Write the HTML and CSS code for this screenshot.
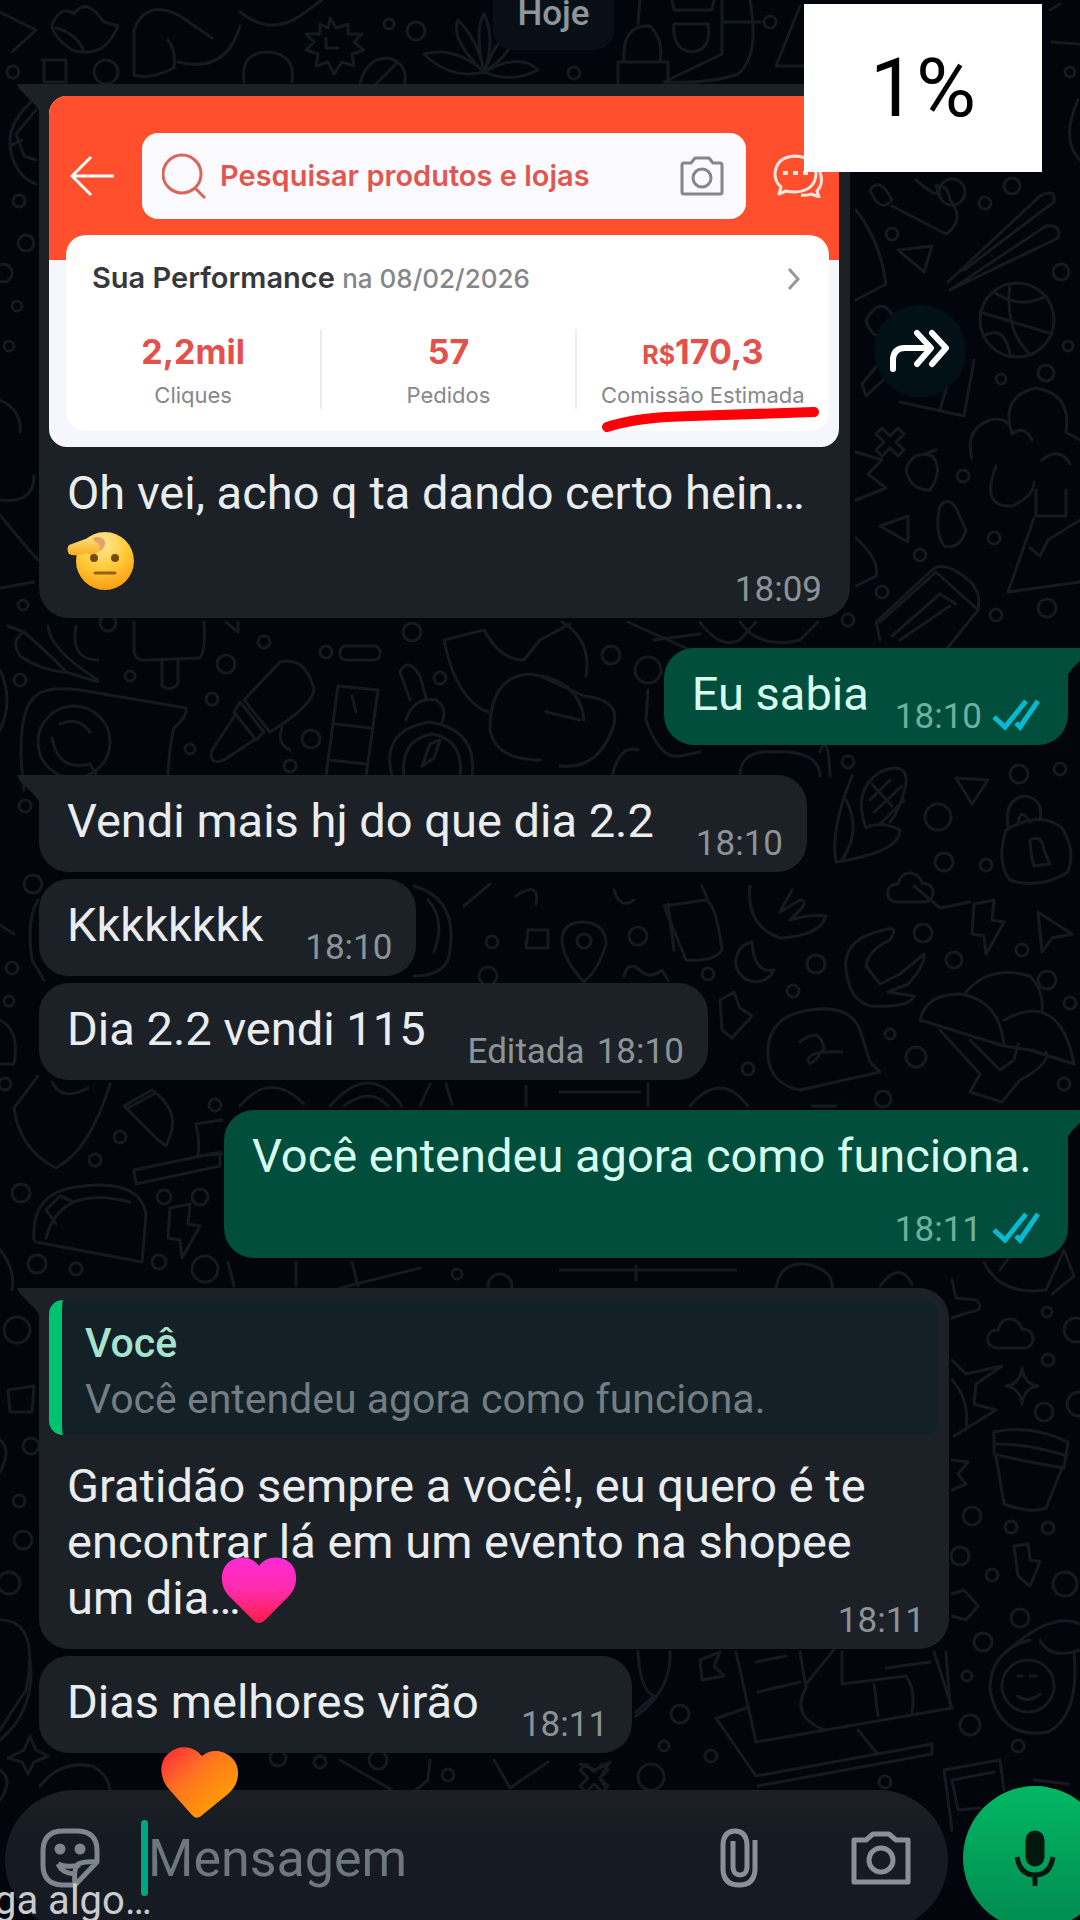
FILE: index.html
```html
<!DOCTYPE html>
<html lang="pt-BR">
<head>
    <meta charset="UTF-8">
    <meta name="viewport" content="width=device-width, initial-scale=1.0">
    <title>Conversa</title>
    <link rel="stylesheet" href="styles.css">
</head>
<body>
    <div class="screen">
        <!-- Wallpaper doodles -->
        <svg class="wallpaper" viewBox="0 0 1080 1920" preserveAspectRatio="xMidYMin slice" aria-hidden="true">
            <defs>
                <path id="bolt" d="M-14-24L6-28L4-8L16-6L-2 26L-4 8L-16 6Z"/>
                <path id="cross" d="M-14-8L-8-14L0-6L8-14L14-8L6 0L14 8L8 14L0 6L-8 14L-14 8L-6 0Z"/>
                <path id="tri" d="M-16-10L16-8L0 16Z"/>
                <path id="spark" d="M0-18Q2-2 16 0Q2 2 0 18Q-2 2-16 0Q-2-2 0-18Z"/>
                <path id="cloud" d="M-14 14Q-24 12-22 2Q-20-4-12-4Q-8-18 4-14Q10-12 12-5Q24-4 23 6Q21 14 14 14Z"/>
                <path id="moon" d="M-2-20A20 20 0 1 0 20 8Q0 12-2-20Z"/>
                <path id="cup" d="M-36-36Q0-44 38-26L34 0Q-4-6-36-14ZM-34-12L-26 36Q0 46 16 40L32 0M-34-24Q0-24 37-12"/>
            </defs>
            <!-- top -->
            <path d="M0 12L36 30L12 52M52 24Q62 4 74 14Q86-4 104 22L118 26Q104 60 72 50Q52 36 52 24ZM56 28Q78 34 84 52M134 30Q146-2 180 16L212 38M134 30L134 75Q150 80 174 68Q176 50 168 40M178 62Q226 74 240 26M240 12Q270 36 300 16L322 0M244 82Q240 52 268 52Q296 54 292 82M42 60H66V82H44V60"/>
            <path d="M330 18L336 28L348 24L348 34L362 34L354 42L364 50L352 54L354 66L342 62L334 74L328 62L316 66L318 54L306 50L314 42L306 34L320 34L320 24L328 28ZM326 38V48H338"/>
            <path d="M484 72Q450 40 458 20Q478 40 484 72Q474 30 484 14Q496 40 484 72Q500 30 514 36Q510 56 484 72Q520 52 538 70Q510 84 484 72Q450 80 424 54Q456 46 484 72"/>
            <path d="M360 84Q366 58 388 58Q410 64 404 86M376 84L398 62M618 84V62H668V82M624 60Q622 24 650 26Q664 40 660 60M640 0L638 24M672 0L674 10H712L714 0M674 24H708Q712 50 692 52Q672 50 674 24ZM722 0V54L664 82M750 0Q760 56 738 74Q710 84 664 82M722 22H760M800 6L776 66H804M1050 10L1060 4M1052 42L1080 44M1078 100Q1060 140 1080 160"/>
            <path d="M36 98Q8 120 10 146Q14 176 36 184M36 110L16 134L24 156L36 160M10 146L22 140"/>
            <!-- right of the first bubble -->
            <path d="M870 190Q880 176 892 200Q880 214 870 190M892 206L946 234Q966 220 950 200Q948 184 936 186Q944 204 916 180M856 210Q880 240 886 284L856 300M898 250L932 246L924 272Z"/>
            <path d="M948 282L1040 196Q1056 188 1054 202L964 270M950 290L1046 226Q1062 224 1058 238Z"/>
            <circle cx="1017" cy="320" r="37"/>
            <path d="M980 312L1052 334M994 292Q1020 310 1046 296M1010 284Q1004 330 1030 354M984 336Q1004 324 1010 354M866 320Q880 296 892 314L888 334Q872 342 866 320M862 384L880 362L892 372L866 396ZM900 402L964 416L974 360M940 410L950 376"/>
            <use href="#cross" x="890" y="442"/>
            <path d="M972 458Q964 430 990 420Q1010 416 1012 434Q1000 396 1036 388Q1072 394 1066 432Q1080 440 1080 440M1012 434Q1024 424 1032 440M996 466Q980 508 1012 506Q1034 496 1034 482M1036 490V516H1066L1066 490M1034 518L1008 592L1080 582M1080 520L1048 540L1040 556L1030 548M1042 460Q1060 446 1070 464"/>
            <path d="M856 452L882 460L868 474L886 488L856 500M906 470Q912 450 932 456Q944 470 930 490Q910 490 906 470ZM924 454L936 450M880 526L908 516V542ZM940 506Q948 496 956 508L966 530Q960 550 944 546Q934 530 940 506M856 538Q880 560 876 576L856 586"/>
            <path d="M880 640L876 622L932 570Q944 560 966 578Q982 590 978 610L946 650M880 622L936 572L976 608M892 636L940 594L956 604M900 640L950 606"/>
            <!-- left edge and strip under the first bubble -->
            <path d="M0 400Q22 410 20 432M0 500Q34 504 34 476M0 515Q20 540 38 560M0 588L34 582M0 670Q14 700 0 730M8 626L24 632Q56 660 66 672L98 682M24 632Q10 640 20 656Q40 670 64 672M48 626Q50 650 98 680M76 626Q70 660 98 660M134 622V652Q136 662 148 660L200 658Q206 650 204 622M162 662V686Q170 692 178 684V660M226 622L238 632L238 622"/>
            <rect x="340" y="646" width="40" height="14" rx="6"/>
            <path d="M24 790Q14 710 38 694Q50 686 80 690L186 708Q188 716 174 728Q170 740 168 776"/>
            <circle cx="74" cy="742" r="36"/>
            <path d="M52 738Q58 772 90 764L96 774M60 724Q78 716 90 732M244 700L280 662Q306 656 314 690Q312 706 270 732ZM240 702L264 732L256 740L234 712ZM236 714L212 750Q208 766 224 760L254 740M282 728Q276 744 290 750M338 686L378 690L366 776M338 686L326 776M336 724L370 728M330 760L366 764M352 696L356 712M400 672Q408 656 420 676L426 698M400 672L410 700M406 720Q414 696 436 700Q448 708 442 722M392 776Q380 730 430 722Q478 730 472 776M404 776Q400 740 432 734Q464 740 460 776M422 766L430 744L440 740L434 758Z"/>
            <path d="M444 640L484 630Q500 660 524 660L540 640M444 640Q456 700 488 712M490 730Q490 676 530 674Q580 680 584 720M490 730Q496 760 540 760M540 676L584 696Q620 700 614 724Q600 770 560 766M546 712L580 720M562 622Q592 640 586 676M540 640L570 624M628 622L690 650M654 640L700 634M700 622Q720 650 740 640L756 622M740 622Q760 650 800 640L818 622M648 690L646 720Q660 760 680 756L700 752M612 776Q620 744 638 750M740 776Q740 750 772 752Q820 750 820 776M830 776Q828 730 820 752"/>
            <!-- around the short messages -->
            <path d="M852 776Q830 830 836 862L848 860Q900 850 900 830Q880 820 866 828M846 800Q862 830 842 860M866 828Q852 790 880 772Q908 760 906 784Q900 810 890 822M870 800L890 780M874 812L902 786M880 824L904 800M872 784L892 806"/>
            <use href="#tri" x="972" y="788"/>
            <path d="M1008 826Q1004 800 1024 796Q1044 798 1040 820M1018 824Q1020 806 1030 822M1006 830Q1040 810 1062 828Q1076 850 1068 872Q1040 890 1010 880Q996 862 1006 830ZM1030 840Q1042 834 1044 850L1050 864L1034 866Q1030 852 1030 840"/>
            <path d="M414 886Q462 900 448 960Q440 976 414 976M428 900Q446 920 434 952M464 906L490 884M516 896Q540 880 536 904M528 930L548 930V948H526ZM562 940Q562 922 584 922Q606 924 606 944Q600 968 584 982Q562 958 562 940Z"/>
            <circle cx="584" cy="941" r="7"/>
            <path d="M624 976Q628 960 640 970Q650 980 662 970L668 980M664 906L706 900Q716 904 722 950Q714 962 686 960ZM668 904L674 950M702 886L708 900M614 890Q620 910 634 900M750 886Q746 926 780 938Q820 936 826 916Q810 914 790 920Q812 900 800 900L780 912L792 890M914 886L940 908L970 902"/>
            <use href="#moon" x="754" y="962"/>
            <use href="#cloud" x="910" y="888"/>
            <use href="#bolt" x="988" y="928"/>
            <path d="M1038 912L1042 952L1052 938L1072 934ZM848 980Q836 940 884 930Q900 924 890 940Q868 950 866 966L880 984L900 974L924 954Q926 964 908 984L888 992L914 996Q910 1008 870 1006Q852 1000 848 980M720 1000L734 992L740 1008L752 1016L732 1038L722 1030ZM768 1056Q766 1016 810 1010Q850 1004 860 1030L870 1062L880 1072L800 1090Q770 1084 768 1056M800 1042Q820 1026 824 1048Q810 1070 808 1060Q810 1050 842 1052M920 1020Q926 994 960 994Q1000 1000 1004 1046ZM966 992Q990 964 1030 976Q1044 990 1042 1010M1004 1020Q1060 990 1074 1064L1030 1050L1004 1046M940 1030L980 1074L970 1092L1002 1102L1020 1080Q1050 1064 1046 1052M970 1040L1000 1070L1014 1060L1018 1044"/>
            <!-- left edge middle -->
            <path d="M38 900Q26 920 32 960L44 980M0 925L14 934M0 1020Q20 1030 14 1064L0 1064M38 1076L14 1108Q20 1150 56 1168Q90 1150 110 1084M52 1082Q62 1102 88 1088M124 1106L152 1090Q180 1110 170 1136L166 1146L156 1138ZM128 1108L154 1094M222 1120L196 1124Q200 1140 198 1156L222 1154M134 1170L220 1152V1166L136 1184ZM240 1106Q270 1070 304 1104M330 1106Q370 1060 402 1106M344 1106Q370 1086 388 1106M420 1106L430 1084M446 1084L452 1104M526 1086V1106M560 1092H640M648 1084V1106M690 1106Q720 1070 748 1106M812 1106H836"/>
            <path d="M34 1240Q30 1190 84 1186Q140 1180 146 1214L142 1262L36 1242M46 1238Q60 1184 130 1202M56 1224L46 1210L60 1196L74 1202M0 1250Q16 1270 12 1290"/>
            <use href="#bolt" x="184" y="1232"/>
            <path d="M228 1262L234 1286M296 1262V1286M352 1262L358 1286M340 1288L420 1268M636 1266V1280M560 1270H736M776 1288Q780 1262 806 1264Q834 1270 832 1288M880 1286Q900 1260 912 1284M984 1262Q1000 1296 1046 1290L1064 1250L1074 1276L1052 1294M1010 1256L1000 1270"/>
            <!-- left edge low, right of the long message -->
            <path d="M8 1390L34 1386L32 1412L10 1412ZM0 1440Q12 1450 0 1472M0 1620Q40 1620 26 1690L0 1730M30 1660Q36 1710 0 1740M0 1770Q14 1780 0 1800M952 1280L956 1298L976 1300Q986 1310 970 1312L952 1318M952 1360L966 1374L1002 1366L976 1384L974 1404L996 1410L954 1436M952 1380Q970 1400 966 1430M952 1460L968 1462L958 1474L966 1484L952 1490"/>
            <use href="#cloud" x="1010" y="1334"/>
            <use href="#spark" x="1022" y="1386"/>
            <use href="#cup" x="1030" y="1468"/>
            <path d="M1014 1546L1028 1544L1030 1560L1040 1562L1030 1586L1018 1576ZM952 1594L964 1590L978 1606L966 1620L952 1616M1002 1656Q1050 1610 1080 1624M1040 1640Q1050 1660 1080 1650"/>
            <!-- above the composer -->
            <path d="M736 1652L756 1742L952 1708L934 1652M946 1652L950 1706M718 1718L746 1708M716 1718L756 1776L932 1744V1754L758 1786M858 1730L876 1752M756 1662L786 1656M758 1692L800 1682M800 1652L806 1688Q790 1716 824 1730M806 1684L842 1640M842 1652V1684L906 1676Q916 1690 912 1712M874 1684L878 1716M886 1668L930 1662"/>
            <path d="M990 1690Q990 1650 1030 1640M990 1690Q1000 1740 1048 1732Q1080 1716 1074 1652"/>
            <circle cx="1028" cy="1686" r="26"/>
            <path d="M1018 1676H1022M1030 1676H1036M1018 1696Q1028 1704 1040 1694M638 1652Q640 1690 654 1696L636 1712M670 1652Q672 1690 636 1716M700 1660L720 1652L714 1666L724 1676L702 1680ZM944 1770L1000 1760L1004 1790M944 1770L952 1830M952 1780L994 1772M952 1780L958 1810L980 1808M1034 1780L1068 1784M8 1758L24 1750L30 1736L36 1750L48 1756L34 1762L28 1774L22 1762ZM40 1786Q60 1760 92 1766Q108 1774 110 1790M340 1760L392 1790M430 1760L428 1780L416 1790M494 1760L510 1788L548 1762M580 1764L596 1770L610 1762L600 1778L606 1788"/>
            <use href="#cross" x="594" y="1778"/>
            <!-- small dots -->
            <g>
                <circle cx="13" cy="72" r="6"/><circle cx="106" cy="72" r="12"/><circle cx="389" cy="24" r="5"/><circle cx="416" cy="31" r="9"/><circle cx="574" cy="73" r="6"/><circle cx="770" cy="22" r="6"/><circle cx="1070" cy="72" r="5"/><circle cx="19" cy="201" r="6"/><circle cx="26" cy="243" r="8"/><circle cx="3" cy="273" r="9"/><circle cx="17" cy="306" r="5"/><circle cx="9" cy="346" r="5"/><circle cx="985" cy="203" r="6"/><circle cx="952" cy="192" r="13"/><circle cx="1012" cy="186" r="8"/><circle cx="892" cy="234" r="6"/><circle cx="1061" cy="272" r="8"/><circle cx="1068" cy="346" r="5"/><circle cx="1046" cy="373" r="8"/><circle cx="1001" cy="379" r="5"/>
                <circle cx="963" cy="476" r="6"/><circle cx="920" cy="555" r="6"/><circle cx="994" cy="538" r="6"/><circle cx="882" cy="592" r="6"/><circle cx="1047" cy="608" r="9"/><circle cx="996" cy="615" r="6"/><circle cx="848" cy="620" r="6"/><circle cx="23" cy="605" r="5"/><circle cx="20" cy="680" r="6"/><circle cx="108" cy="623" r="8"/><circle cx="130" cy="676" r="5"/><circle cx="226" cy="664" r="9"/><circle cx="264" cy="642" r="6"/><circle cx="326" cy="652" r="6"/><circle cx="412" cy="632" r="9"/><circle cx="212" cy="699" r="6"/><circle cx="190" cy="749" r="5"/><circle cx="311" cy="739" r="9"/><circle cx="290" cy="766" r="6"/><circle cx="440" cy="678" r="6"/><circle cx="611" cy="655" r="9"/><circle cx="648" cy="670" r="13"/><circle cx="848" cy="762" r="6"/><circle cx="1019" cy="774" r="9"/><circle cx="1060" cy="769" r="6"/>
                <circle cx="938" cy="817" r="13"/><circle cx="944" cy="862" r="9"/><circle cx="986" cy="865" r="6"/><circle cx="25" cy="806" r="6"/><circle cx="33" cy="884" r="9"/><circle cx="12" cy="968" r="6"/><circle cx="9" cy="1001" r="5"/><circle cx="638" cy="936" r="9"/><circle cx="708" cy="974" r="6"/><circle cx="816" cy="964" r="9"/><circle cx="793" cy="991" r="6"/><circle cx="923" cy="933" r="9"/><circle cx="954" cy="960" r="8"/><circle cx="1022" cy="950" r="6"/><circle cx="1047" cy="980" r="9"/><circle cx="1070" cy="1003" r="6"/><circle cx="916" cy="1057" r="10"/><circle cx="890" cy="1034" r="5"/><circle cx="748" cy="1069" r="6"/><circle cx="883" cy="1099" r="8"/><circle cx="1064" cy="1084" r="6"/><circle cx="492" cy="942" r="6"/><circle cx="488" cy="976" r="9"/>
                <circle cx="5" cy="1084" r="6"/><circle cx="215" cy="1105" r="6"/><circle cx="120" cy="1137" r="6"/><circle cx="95" cy="1160" r="6"/><circle cx="21" cy="1193" r="9"/><circle cx="164" cy="1197" r="7"/><circle cx="200" cy="1197" r="8"/><circle cx="37" cy="1264" r="9"/><circle cx="76" cy="1269" r="6"/><circle cx="159" cy="1262" r="7"/><circle cx="205" cy="1269" r="13"/><circle cx="457" cy="1274" r="5"/><circle cx="500" cy="1286" r="12"/><circle cx="17" cy="1330" r="13"/><circle cx="31" cy="1446" r="8"/><circle cx="19" cy="1501" r="6"/><circle cx="23" cy="1540" r="9"/><circle cx="9" cy="1583" r="11"/>
                <circle cx="1048" cy="1360" r="6"/><circle cx="1047" cy="1312" r="5"/><circle cx="1076" cy="1330" r="12"/><circle cx="1044" cy="1412" r="9"/><circle cx="1079" cy="1404" r="12"/><circle cx="972" cy="1516" r="9"/><circle cx="1011" cy="1527" r="6"/><circle cx="1048" cy="1528" r="6"/><circle cx="960" cy="1556" r="9"/><circle cx="992" cy="1575" r="6"/><circle cx="1065" cy="1584" r="12"/><circle cx="1020" cy="1618" r="9"/><circle cx="983" cy="1642" r="9"/><circle cx="680" cy="1714" r="9"/><circle cx="664" cy="1746" r="5"/><circle cx="711" cy="1756" r="6"/><circle cx="651" cy="1777" r="13"/><circle cx="970" cy="1725" r="10"/><circle cx="1018" cy="1746" r="6"/><circle cx="885" cy="1782" r="6"/><circle cx="967" cy="1676" r="5"/><circle cx="278" cy="1758" r="8"/><circle cx="320" cy="1762" r="6"/><circle cx="378" cy="1760" r="9"/><circle cx="448" cy="1775" r="6"/>
            </g>
        </svg>

        <main class="chat">
            <div class="day">Hoje</div>

            <div class="row">
                <article class="bubble tail has-card">
                    <div class="card">
                        <div class="card-header">
                            <a href="#" class="back" aria-label="Voltar">
                                <svg viewBox="0 0 45 42" fill="none" stroke="#fff" stroke-width="3"><path d="M21 2L2 21L21 40M2 21H44"/></svg>
                            </a>
                            <label class="search">
                                <svg class="search-icon" viewBox="0 0 44 46" fill="none" stroke="#d9655c" stroke-width="3"><circle cx="20" cy="21" r="19"/><path d="M33 35L43 45"/></svg>
                                <input type="search" placeholder="Pesquisar produtos e lojas" aria-label="Pesquisar produtos e lojas">
                                <svg class="search-camera" viewBox="0 0 44 40" fill="none" stroke="#85858b" stroke-width="3" stroke-linejoin="round"><path d="M4 7H11L15 2H29L33 7H40Q42 7 42 9V36Q42 38 40 38H4Q2 38 2 36V9Q2 7 4 7Z"/><circle cx="22" cy="22" r="9"/></svg>
                            </label>
                            <svg class="chat-icon" viewBox="0 0 50 44" fill="none" stroke="#ffe6df" stroke-width="3" stroke-linejoin="round"><path d="M6 40L8 33Q2 28 2 20Q3 3 22 2Q42 3 43 20Q42 37 22 38Q16 38 13 37Z"/><path d="M47 18Q51 30 44 37L46 43L38 40Q34 42 28 41"/><path d="M10 19H15M20 19H25M30 19H35" stroke-width="4"/></svg>
                        </div>
                        <div class="panel">
                            <div class="panel-title">
                                <h2>Sua Performance <span>na 08/02/2026</span></h2>
                                <svg class="chevron" viewBox="0 0 14 24" fill="none" stroke="#98989c" stroke-width="3"><path d="M2 2L11 12L2 22"/></svg>
                            </div>
                            <dl class="stats">
                                <div><dd>2,2mil</dd><dt>Cliques</dt></div>
                                <div><dd>57</dd><dt>Pedidos</dt></div>
                                <div>
                                    <dd><small>R$</small>170,3</dd><dt>Comissão Estimada</dt>
                                    <svg class="underline" viewBox="0 0 220 28" fill="none" stroke="#fd0008" stroke-width="10" stroke-linecap="round"><path d="M6 20Q36 10 90 9L213 5"/></svg>
                                </div>
                            </dl>
                        </div>
                    </div>
                    <div class="body">
                        <p>Oh vei, acho q ta dando certo hein… <svg class="emoji" viewBox="0 0 68 60" role="img" aria-label="Saudação"><defs><radialGradient id="face" cx="45%" cy="20%" r="85%"><stop offset="0" stop-color="#ffe998"/><stop offset=".5" stop-color="#ffcb39"/><stop offset="1" stop-color="#f79a0d"/></radialGradient><linearGradient id="hand" x1="0" y1="0" x2="0" y2="1"><stop offset="0" stop-color="#ffe27a"/><stop offset="1" stop-color="#f7ac22"/></linearGradient></defs><circle cx="38" cy="30" r="29" fill="url(#face)"/><path d="M2 14Q-1 18 2 23Q7 26 20 22Q26 26 31 21Q41 17 38 9Q33 3 24 6Z" fill="url(#hand)"/><path d="M26 7Q35 4 38 11Q38 17 32 20Q35 12 28 11Z" fill="#e7a06a"/><ellipse cx="27" cy="27" rx="4" ry="4" fill="#764b13"/><ellipse cx="48" cy="27" rx="4" ry="4" fill="#764b13"/><path d="M28 42H48" stroke="#966017" stroke-width="3" stroke-linecap="round"/></svg></p>
                        <span class="meta"><time>18:09</time></span>
                    </div>
                </article>
                <button type="button" class="forward" aria-label="Encaminhar">
                    <svg viewBox="0 0 60 44" fill="none" stroke="#fff" stroke-width="6" stroke-linecap="round" stroke-linejoin="round"><path d="M3 40V30Q4 19 15 19H39M27 4L41 19L27 35M42 4L56 19L42 35"/></svg>
                </button>
            </div>

            <div class="row out group">
                <article class="bubble tail">
                    <div class="body inline">
                        <p>Eu sabia</p>
                        <span class="meta"><time>18:10</time> <svg class="ticks" viewBox="0 0 48 32" fill="none" stroke="#08b9d2" stroke-width="5"><path d="M2 18L13 28L34 2M24 24L28 28L46 2"/></svg></span>
                    </div>
                </article>
            </div>

            <div class="row group">
                <article class="bubble tail">
                    <div class="body inline">
                        <p>Vendi mais hj do que dia 2.2</p>
                        <span class="meta"><time>18:10</time></span>
                    </div>
                </article>
            </div>

            <div class="row">
                <article class="bubble">
                    <div class="body inline">
                        <p>Kkkkkkkk</p>
                        <span class="meta"><time>18:10</time></span>
                    </div>
                </article>
            </div>

            <div class="row">
                <article class="bubble">
                    <div class="body inline">
                        <p>Dia 2.2 vendi 115</p>
                        <span class="meta">Editada <time>18:10</time></span>
                    </div>
                </article>
            </div>

            <div class="row out group">
                <article class="bubble tail">
                    <div class="body stacked">
                        <p>Você entendeu agora como funciona.</p>
                        <span class="meta"><time>18:11</time> <svg class="ticks" viewBox="0 0 48 32" fill="none" stroke="#08b9d2" stroke-width="5"><path d="M2 18L13 28L34 2M24 24L28 28L46 2"/></svg></span>
                    </div>
                </article>
            </div>

            <div class="row group">
                <article class="bubble tail has-quote">
                    <blockquote class="quote">
                        <strong>Você</strong>
                        <p>Você entendeu agora como funciona.</p>
                    </blockquote>
                    <div class="body">
                        <p>Gratidão sempre a você!, eu quero é te encontrar lá em um evento na shopee um dia…</p>
                        <span class="meta"><time>18:11</time></span>
                    </div>
                    <svg class="heart pink" viewBox="0 0 76 68" aria-hidden="true"><defs><linearGradient id="pink" x1="0" y1="0" x2="0" y2="1"><stop offset="0" stop-color="#ff2ad6"/><stop offset=".5" stop-color="#ff2cac"/><stop offset="1" stop-color="#ff1c45"/></linearGradient></defs><path d="M38 9C31-1 17-2 8 5C-2 13-1 30 8 39L33 64Q38 68 43 64L68 39C77 30 78 13 68 5C59-2 45-1 38 9Z" fill="url(#pink)"/></svg>
                </article>
            </div>

            <div class="row">
                <article class="bubble">
                    <div class="body inline">
                        <p>Dias melhores virão</p>
                        <span class="meta"><time>18:11</time></span>
                    </div>
                    <svg class="heart orange" viewBox="0 0 78 72" aria-hidden="true"><defs><linearGradient id="orange" x1="0" y1="0" x2="1" y2="1"><stop offset=".1" stop-color="#ff3838"/><stop offset=".4" stop-color="#ff7420"/><stop offset=".8" stop-color="#ff9d05"/></linearGradient></defs><path d="M41 9C33-1 18-3 8 6C-3 15-1 31 7 41L31 68Q35 73 40 69L67 47C78 38 81 21 71 11C62 2 49 2 41 9Z" fill="url(#orange)"/></svg>
                </article>
            </div>

            <form class="composer">
                <div class="field">
                    <button type="button" class="icon-button" aria-label="Figurinhas">
                        <svg width="60" height="60" viewBox="0 0 60 60" fill="none" stroke="#7c868b" stroke-width="5" stroke-linejoin="round"><path d="M35 57H22Q3 56 3 37V22Q4 3 23 3H38Q57 4 57 22V34ZM35 57Q33 36 41 35Q46 33 57 34"/><path d="M18 36Q22 45 34 46M18 36Q26 40 40 37"/><circle cx="20" cy="21" r="3" fill="#7c868b"/><circle cx="40" cy="21" r="3" fill="#7c868b"/></svg>
                    </button>
                    <span class="caret"></span>
                    <input type="text" placeholder="Mensagem" aria-label="Mensagem">
                    <button type="button" class="icon-button" aria-label="Anexar">
                        <svg width="38" height="60" viewBox="0 0 38 60" fill="none" stroke="#899196" stroke-width="5"><path d="M35 12V42Q34 57 19 57Q4 57 3 42V16Q4 3 15 3Q26 3 27 16V40Q26 47 20 47Q14 47 13 40V13"/></svg>
                    </button>
                    <button type="button" class="icon-button" aria-label="Câmera">
                        <svg width="60" height="54" viewBox="0 0 60 54" fill="none" stroke="#899196" stroke-width="5" stroke-linejoin="round"><path d="M3 9H15L22 3H38L45 9H57V51H3Z"/><circle cx="30" cy="29" r="12"/></svg>
                    </button>
                </div>
                <button type="button" class="mic" aria-label="Gravar áudio">
                    <svg width="42" height="58" viewBox="0 0 42 58" fill="none" stroke="#02180f" stroke-width="5"><rect x="14" y="4" width="14" height="31" rx="7" fill="#02180f"/><path d="M3 28Q6 46 21 46Q36 46 39 28M21 46V57"/></svg>
                </button>
            </form>
        </main>

        <div class="percent">1%</div>
        <div class="caption">Diga algo…</div>
    </div>
</body>
</html>
```
FILE: styles.css
```css
* {
    margin: 0;
    padding: 0;
    box-sizing: border-box;
}
body {
    background: #02050c;
    font-family: Roboto, "Noto Sans", sans-serif;
}
button {
    border: none;
    background: none;
    cursor: pointer;
}
input {
    min-width: 0;
    border: none;
    outline: none;
    background: transparent;
}
svg {
    display: block;
    flex: none;
}
.screen {
    position: relative;
    height: 100vh;
    overflow: hidden;
}
.wallpaper {
    position: absolute;
    inset: 0;
    width: 100%;
    height: 100%;
    fill: none;
    stroke: #151a21;
    stroke-width: 3;
    stroke-linejoin: round;
    stroke-linecap: round;
}

/* Chat column, slightly wider than the window */
.chat {
    position: relative;
    display: flex;
    flex-direction: column;
    gap: 7px;
    margin: -22px -27px 0 0;
}
.day {
    align-self: center;
    margin-bottom: 27px;
    padding: 15px 24px;
    border-radius: 20px;
    background: #080f16;
    color: #8e969b;
    font-size: 35px;
    font-weight: 500;
    line-height: 42px;
}
.row {
    display: flex;
    align-items: center;
    gap: 24px;
    padding: 0 39px;
}
.row.out {
    justify-content: flex-end;
}
.row.group {
    margin-top: 23px;
}

/* Bubbles */
.bubble {
    position: relative;
    max-width: 910px;
    border-radius: 30px;
    background: #1c2127;
    color: #e9edf0;
}
.out .bubble {
    background: #004e3b;
    color: #d6fdf0;
}
.bubble.tail {
    border-top-left-radius: 0;
}
.out .bubble.tail {
    border-radius: 30px 0 30px 30px;
}
.bubble.tail::before {
    content: "";
    position: absolute;
    top: 0;
    left: -22px;
    width: 23px;
    height: 28px;
    background: inherit;
    clip-path: polygon(0 0, 100% 0, 100% 100%, 80% 76%, 10% 18%);
}
.out .bubble.tail::before {
    left: auto;
    right: -22px;
    clip-path: polygon(0 0, 100% 0, 90% 18%, 20% 76%, 0 100%);
}
.body {
    display: grid;
    padding: 18px 24px 7px 28px;
}
.body > * {
    grid-area: 1 / 1;
}
.body p {
    margin-bottom: 16px;
    font-size: 47px;
    line-height: 56px;
}
.meta {
    display: flex;
    gap: 12px;
    place-self: end;
    color: #8c9398;
    font-size: 35px;
    line-height: 42px;
}
.out .body {
    padding-right: 28px;
}
.out .meta {
    gap: 10px;
    color: #6cb29e;
}
.body.inline {
    grid-template-columns: auto auto;
    column-gap: 42px;
}
.body.inline .meta {
    grid-area: 1 / 2;
}
.out .body.inline {
    column-gap: 26px;
}
.body.stacked {
    row-gap: 9px;
}
.body.stacked p {
    margin-right: 8px;
}
.body.stacked .meta {
    grid-area: 2 / 1;
}
.ticks {
    width: 48px;
    height: 32px;
    margin-top: 3px;
}

/* Card with the sales figures */
.has-card {
    width: 811px;
}
.has-card .body {
    padding: 18px 28px 7px;
}
.has-card .body p {
    margin-bottom: 34px;
}
.card {
    margin: 12px 11px 0 10px;
    border-radius: 18px;
    background: #f6f7fd;
    font-family: Inter, "Open Sans", sans-serif;
    overflow: hidden;
}
.card-header {
    display: flex;
    align-items: center;
    gap: 27px;
    height: 164px;
    padding: 0 16px 5px 21px;
    background: #ff4f2c;
}
.back svg {
    width: 45px;
    height: 42px;
}
.search {
    flex: 1;
    display: flex;
    align-items: center;
    height: 86px;
    padding: 0 22px 0 20px;
    border-radius: 16px;
    background: #fbfaff;
}
.search input {
    flex: 1;
    margin-left: 14px;
    font: 600 29px Inter, sans-serif;
}
.search input::placeholder {
    color: #e1574f;
}
.search-icon {
    width: 44px;
    height: 46px;
}
.search-camera {
    width: 44px;
    height: 40px;
}
.chat-icon {
    width: 50px;
    height: 44px;
}
.panel {
    position: relative;
    margin: -25px 10px 16px 17px;
    padding: 23px 0 22px;
    border-radius: 20px;
    background: #fff;
}
.panel-title {
    display: flex;
    justify-content: space-between;
    align-items: center;
    padding: 0 28px 0 26px;
}
.panel-title h2 {
    color: #37383b;
    font-size: 29px;
    font-weight: 600;
    line-height: 40px;
}
.panel-title span {
    color: #85868a;
    font-size: 26px;
    font-weight: 500;
}
.chevron {
    width: 14px;
    height: 24px;
}
.stats {
    display: grid;
    grid-template-columns: repeat(3, 1fr);
    margin-top: 30px;
    text-align: center;
}
.stats div {
    position: relative;
    display: flex;
    flex-direction: column;
    gap: 9px;
    padding-top: 3px;
}
.stats div + div {
    border-left: 2px solid #ececf0;
}
.stats dd {
    height: 40px;
    color: #e4504a;
    font-size: 34px;
    font-weight: 700;
    line-height: 40px;
}
.stats small {
    font-size: 25px;
    line-height: 1;
}
.stats dt {
    color: #87888c;
    font-size: 22px;
    line-height: 28px;
}
.underline {
    position: absolute;
    left: 24px;
    top: 78px;
    width: 220px;
    height: 28px;
}
.emoji {
    display: inline-block;
    width: 68px;
    height: 60px;
    margin: -10px 0 -20px;
    vertical-align: -6px;
}
.forward {
    display: flex;
    align-items: center;
    justify-content: center;
    width: 92px;
    height: 92px;
    border-radius: 50%;
    background: #021116;
}
.forward svg {
    width: 60px;
    height: 44px;
}

/* Quoted reply */
.has-quote {
    width: 911px;
}
.has-quote .body p {
    margin-right: 24px;
}
.quote {
    margin: 12px 11px 5px 10px;
    padding: 15px 23px 8px;
    border-left: 13px solid #00c270;
    border-radius: 14px;
    background: #132026;
    line-height: 56px;
}
.quote strong {
    display: block;
    color: #a5e3cf;
    font-size: 41px;
    font-weight: 500;
}
.quote p {
    color: #737d83;
    font-size: 41px;
}
.heart {
    position: absolute;
}
.heart.pink {
    left: 182px;
    bottom: 24px;
    width: 76px;
    height: 68px;
}
.heart.orange {
    left: 122px;
    bottom: -66px;
    width: 78px;
    height: 72px;
}

/* Message box */
.composer {
    display: flex;
    gap: 15px;
    margin-top: 30px;
    padding-left: 5px;
}
.field {
    flex: 1;
    min-width: 0;
    display: flex;
    align-items: center;
    height: 140px;
    padding: 0 37px 4px 35px;
    border-radius: 70px;
    background: linear-gradient(#1c2024, #161b23 35%);
}
.field input {
    flex: 1;
    color: #e9edf0;
    font: 52px Roboto, sans-serif;
}
.field input::placeholder {
    color: #6d777d;
    opacity: 1;
}
.caret {
    flex: none;
    width: 7px;
    height: 76px;
    margin-left: 41px;
    border-radius: 4px;
    background: #00a680;
}
.icon-button {
    flex: none;
}
.icon-button + .icon-button {
    margin-left: 93px;
}
.mic {
    flex: none;
    display: flex;
    align-items: center;
    justify-content: center;
    width: 144px;
    height: 144px;
    margin-top: -4px;
    border-radius: 50%;
    background: linear-gradient(#02b763, #008a50);
}

/* Stickers laid over the chat */
.percent {
    position: absolute;
    top: 4px;
    right: 38px;
    width: 238px;
    height: 168px;
    background: #fff;
    color: #000;
    font-size: 82px;
    line-height: 168px;
    text-align: center;
}
.caption {
    position: absolute;
    left: -42px;
    bottom: -5px;
    color: #c9cbce;
    font-size: 40px;
    line-height: 48px;
}
```
